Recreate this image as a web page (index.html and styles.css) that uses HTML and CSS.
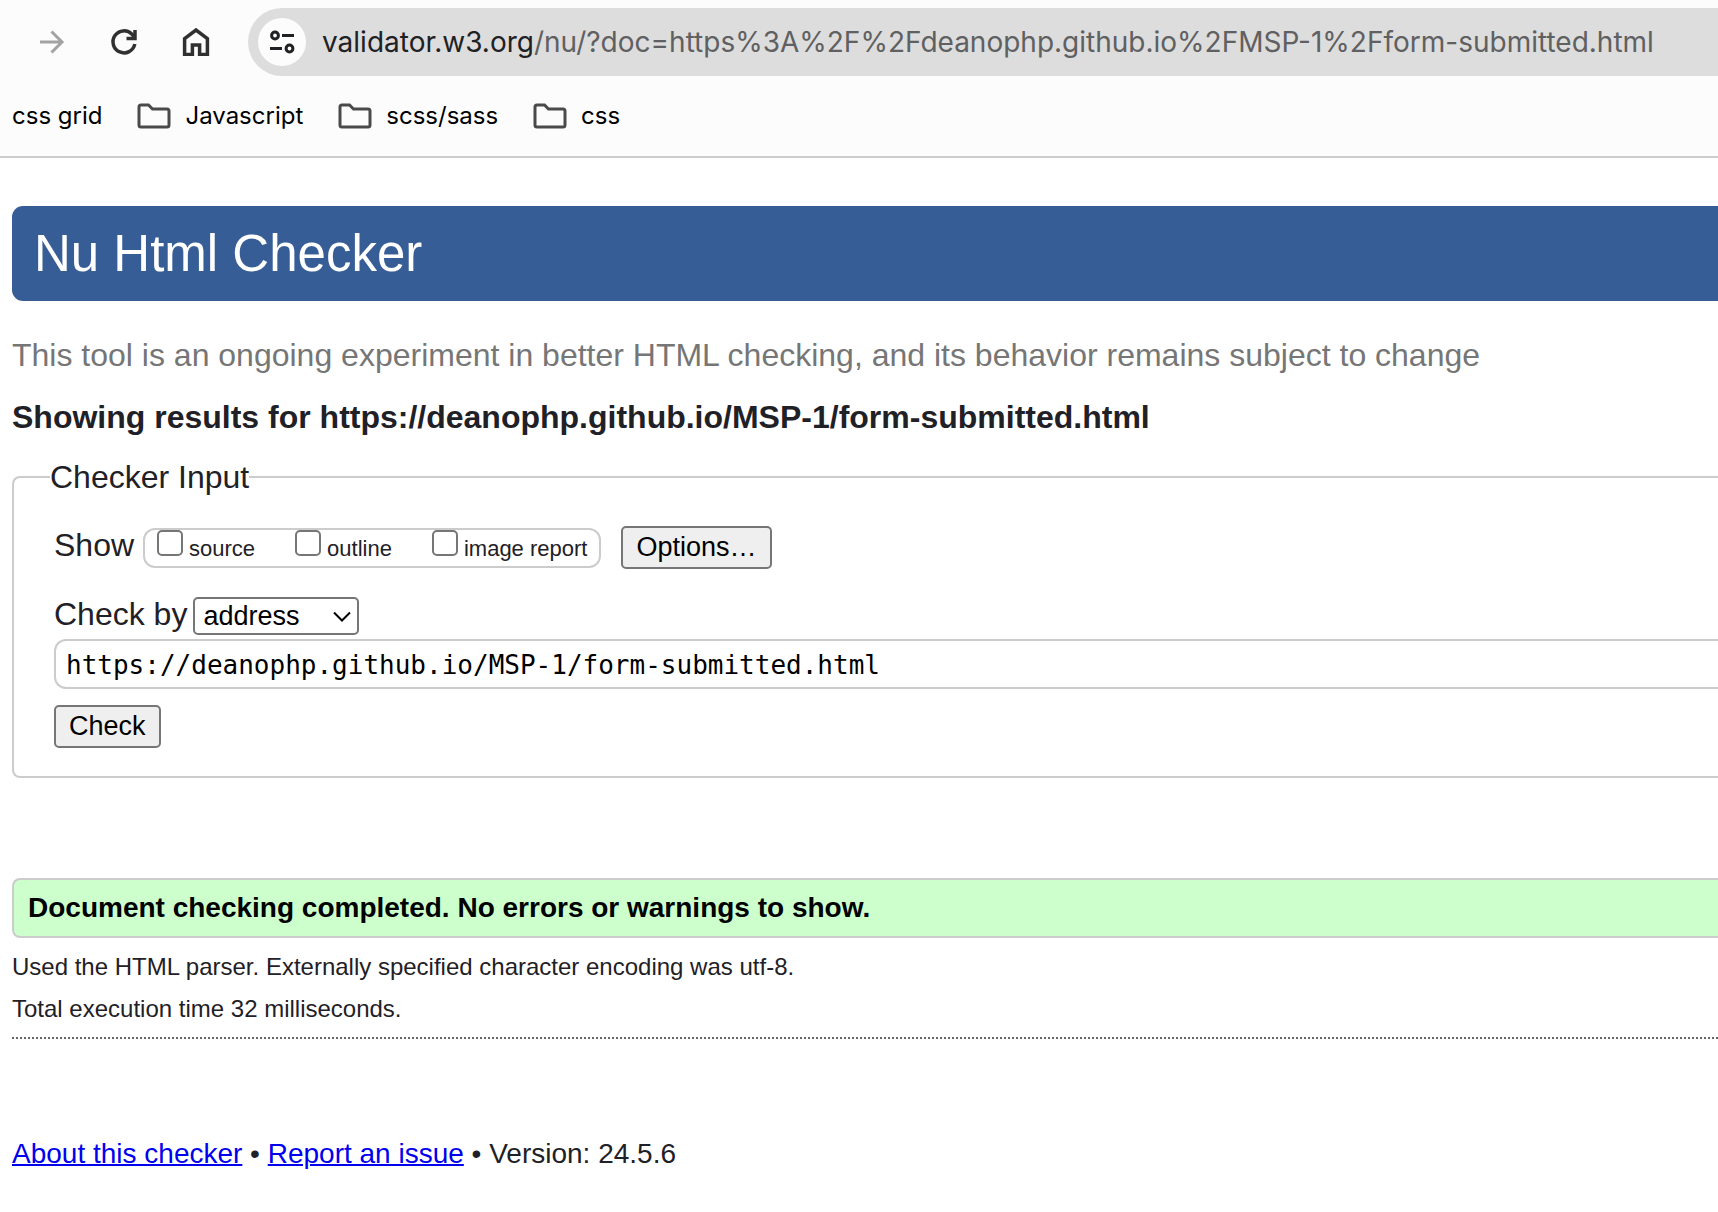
FILE: index.html
```html
<!DOCTYPE html>
<html lang="en">
<head>
<meta charset="utf-8">
<title>Nu Html Checker</title>
<link rel="stylesheet" href="styles.css">
</head>
<body>
<header class="browser">
  <div class="toolbar">
    <div class="nav">
      <button class="icon-button" type="button" aria-label="Forward" disabled>
        <svg class="icon" viewBox="0 0 28 28" fill="none" stroke="#a3a3a3" stroke-width="3"><path d="M2 14H24M13.500 3.500L24 14L13.500 24.500"/></svg>
      </button>
      <button class="icon-button" type="button" aria-label="Reload">
        <svg class="icon" viewBox="0 0 28 28" fill="none" stroke="#303030" stroke-width="3.500"><path d="M24.800 16A11 11 0 1 1 22 6.300L24 8.500"/><path d="M25 2V10.500H16.500"/></svg>
      </button>
      <button class="icon-button" type="button" aria-label="Home">
        <svg class="icon" viewBox="0 0 28 28" fill="none" stroke="#303030" stroke-width="3.500"><path d="M2.600 10.600L14 2L25.400 10.600V26.400H17.600V17H10.400V26.400H2.600Z"/></svg>
      </button>
    </div>
    <div class="address">
      <button class="site-info" type="button" aria-label="View site information">
        <svg class="icon" viewBox="0 0 28 28" fill="none" stroke="#202124" stroke-width="3"><circle cx="7" cy="7.500" r="3.400"/><path d="M14 7.500H26M2 20.500H14"/><circle cx="21.500" cy="20.500" r="3.400"/></svg>
      </button>
      <div class="url"><span class="host">validator.w3.org</span>/nu/?doc=https%3A%2F%2Fdeanophp.github.io%2FMSP-1%2Fform-submitted.html</div>
    </div>
  </div>
  <nav class="bookmarks" aria-label="Bookmarks">
    <button class="bookmark" type="button">css grid</button>
    <button class="bookmark" type="button"><svg class="folder" viewBox="0 0 34 26" fill="none" stroke="#4a4a4a" stroke-width="3"><path d="M4 2H11.500L15.500 6H30Q32 6 32 8V22Q32 24 30 24H4Q2 24 2 22V4Q2 2 4 2Z"/></svg>Javascript</button>
    <button class="bookmark" type="button"><svg class="folder" viewBox="0 0 34 26" fill="none" stroke="#4a4a4a" stroke-width="3"><path d="M4 2H11.500L15.500 6H30Q32 6 32 8V22Q32 24 30 24H4Q2 24 2 22V4Q2 2 4 2Z"/></svg>scss/sass</button>
    <button class="bookmark" type="button"><svg class="folder" viewBox="0 0 34 26" fill="none" stroke="#4a4a4a" stroke-width="3"><path d="M4 2H11.500L15.500 6H30Q32 6 32 8V22Q32 24 30 24H4Q2 24 2 22V4Q2 2 4 2Z"/></svg>css</button>
  </nav>
</header>
<main class="page">
  <h1 class="banner">Nu Html Checker</h1>
  <p class="tagline">This tool is an ongoing experiment in better HTML checking, and its behavior remains subject to change</p>
  <h2 class="results-title">Showing results for https://deanophp.github.io/MSP-1/form-submitted.html</h2>
  <form>
    <fieldset class="checker">
      <legend class="legend">Checker Input</legend>
      <div class="show-row">
        <span>Show</span>
        <div class="toggles">
          <label class="toggle"><input class="check" type="checkbox">source</label>
          <label class="toggle"><input class="check" type="checkbox">outline</label>
          <label class="toggle"><input class="check" type="checkbox">image report</label>
        </div>
        <button class="button" type="button">Options…</button>
      </div>
      <div class="by-row">
        <label for="by">Check by</label>
        <div class="select-wrap">
          <select class="select" id="by"><option>address</option></select>
          <svg class="chevron" viewBox="0 0 18 12" fill="none" stroke="#000" stroke-width="2"><path d="M1 1.500L9 9.500L17 1.500"/></svg>
        </div>
      </div>
      <input class="doc" type="text" aria-label="Document address" value="https://deanophp.github.io/MSP-1/form-submitted.html">
      <button class="button" type="button">Check</button>
    </fieldset>
  </form>
  <p class="success">Document checking completed. No errors or warnings to show.</p>
  <div class="details">
    <p>Used the HTML parser. Externally specified character encoding was utf-8.</p>
    <p>Total execution time 32 milliseconds.</p>
  </div>
  <footer class="footer"><a href="#about">About this checker</a> • <a href="#issue">Report an issue</a> • Version: 24.5.6</footer>
</main>
</body>
</html>
```
FILE: styles.css
```css
* {
  box-sizing: border-box;
}

body {
  margin: 0;
  background: #fff;
  color: #1f2126;
  font-family: "Liberation Sans", Arial, sans-serif;
  font-size: 32px;
  line-height: 36px;
  overflow-x: hidden;
}

h1, h2, p {
  margin: 0;
}

button, select, input {
  margin: 0;
  font-family: inherit;
}

/* Browser chrome */
.browser {
  padding-top: 8px;
  background: #fcfcfc;
  border-bottom: 2px solid #cdcdcd;
  font-family: Inter, Roboto, sans-serif;
}

.toolbar {
  display: flex;
  gap: 38px;
}

.nav {
  display: flex;
  align-items: center;
  gap: 44px;
  padding-left: 38px;
}

.icon-button,
.site-info,
.bookmark {
  display: flex;
  align-items: center;
  padding: 0;
  border: 0;
  background: none;
}

.icon {
  width: 28px;
  height: 28px;
}

.address {
  flex: 1;
  display: flex;
  align-items: center;
  gap: 16px;
  height: 68px;
  padding-left: 10px;
  background: #ddd;
  border-radius: 34px 0 0 34px;
}

.site-info {
  justify-content: center;
  width: 48px;
  height: 48px;
  border-radius: 50%;
  background: #fcfcfc;
}

.url {
  color: #5f6061;
  font-size: 28px;
  white-space: nowrap;
}

.host {
  color: #202124;
}

.bookmarks {
  display: flex;
  gap: 35px;
  padding: 22px 12px;
}

.bookmark {
  gap: 14px;
  color: #000;
  font-size: 24px;
  line-height: 36px;
}

.folder {
  width: 34px;
  height: 26px;
}

/* Page */
.page {
  padding: 48px 0 30px 12px;
}

.banner {
  padding: 18px 22px;
  border-radius: 11px 0 0 11px;
  background: #365d95;
  color: #fff;
  font-size: 51px;
  font-weight: 400;
  line-height: 59px;
}

.tagline {
  margin-top: 36px;
  color: #767676;
}

.results-title {
  margin: 26px 0 24px;
  font-size: 32px;
}

.checker {
  min-width: 0;
  margin: 0;
  padding: 31px 0 28px 40px;
  border: 2px solid #ccc;
  border-right: 0;
  border-radius: 8px 0 0 8px;
}

.legend {
  margin-left: -4px;
  padding: 0;
}

.show-row {
  display: flex;
  align-items: baseline;
}

.toggles {
  display: flex;
  gap: 40px;
  margin: 0 20px 0 9px;
  padding: 0 12px 4px;
  border: 2px solid #ccc;
  border-radius: 12px;
  font-size: 22px;
  line-height: 26px;
}

.toggle {
  display: flex;
  align-items: baseline;
  gap: 6px;
}

.check {
  appearance: none;
  width: 26px;
  height: 26px;
  border: 2px solid #767676;
  border-radius: 5px;
  background: #fff;
}

.button {
  padding: 4px 13px;
  border: 2px solid #767676;
  border-radius: 5px;
  background: #efefef;
  color: #000;
  font-size: 27px;
  line-height: 31px;
}

.by-row {
  display: flex;
  align-items: baseline;
  gap: 6px;
  margin-top: 27px;
}

.select-wrap {
  position: relative;
}

.select {
  appearance: none;
  display: block;
  width: 166px;
  height: 38px;
  padding: 0 8px;
  border: 2px solid #767676;
  border-radius: 5px;
  background: #fff;
  color: #000;
  font-size: 27px;
}

.chevron {
  position: absolute;
  top: 14px;
  right: 8px;
  width: 18px;
  height: 12px;
  pointer-events: none;
}

.doc {
  display: block;
  width: 100%;
  height: 50px;
  margin: 4px 0 16px;
  padding: 2px 10px 0;
  border: 2px solid #ccc;
  border-right: 0;
  border-radius: 12px 0 0 12px;
  color: #000;
  font-family: "DejaVu Sans Mono", monospace;
  font-size: 26px;
}

.success {
  margin-top: 100px;
  padding: 12px 14px;
  border: 2px solid #ccc;
  border-right: 0;
  border-radius: 8px 0 0 8px;
  background: #cfc;
  color: #000;
  font-size: 28px;
  font-weight: 700;
  line-height: 32px;
}

.details {
  display: grid;
  gap: 14px;
  padding: 15px 0 14px;
  border-bottom: 2px dotted #666;
  font-size: 24px;
  line-height: 28px;
}

.footer {
  margin-top: 99px;
  font-size: 28px;
  line-height: 32px;
}

.footer a {
  color: #00e;
  text-decoration-thickness: 2px;
}
```
